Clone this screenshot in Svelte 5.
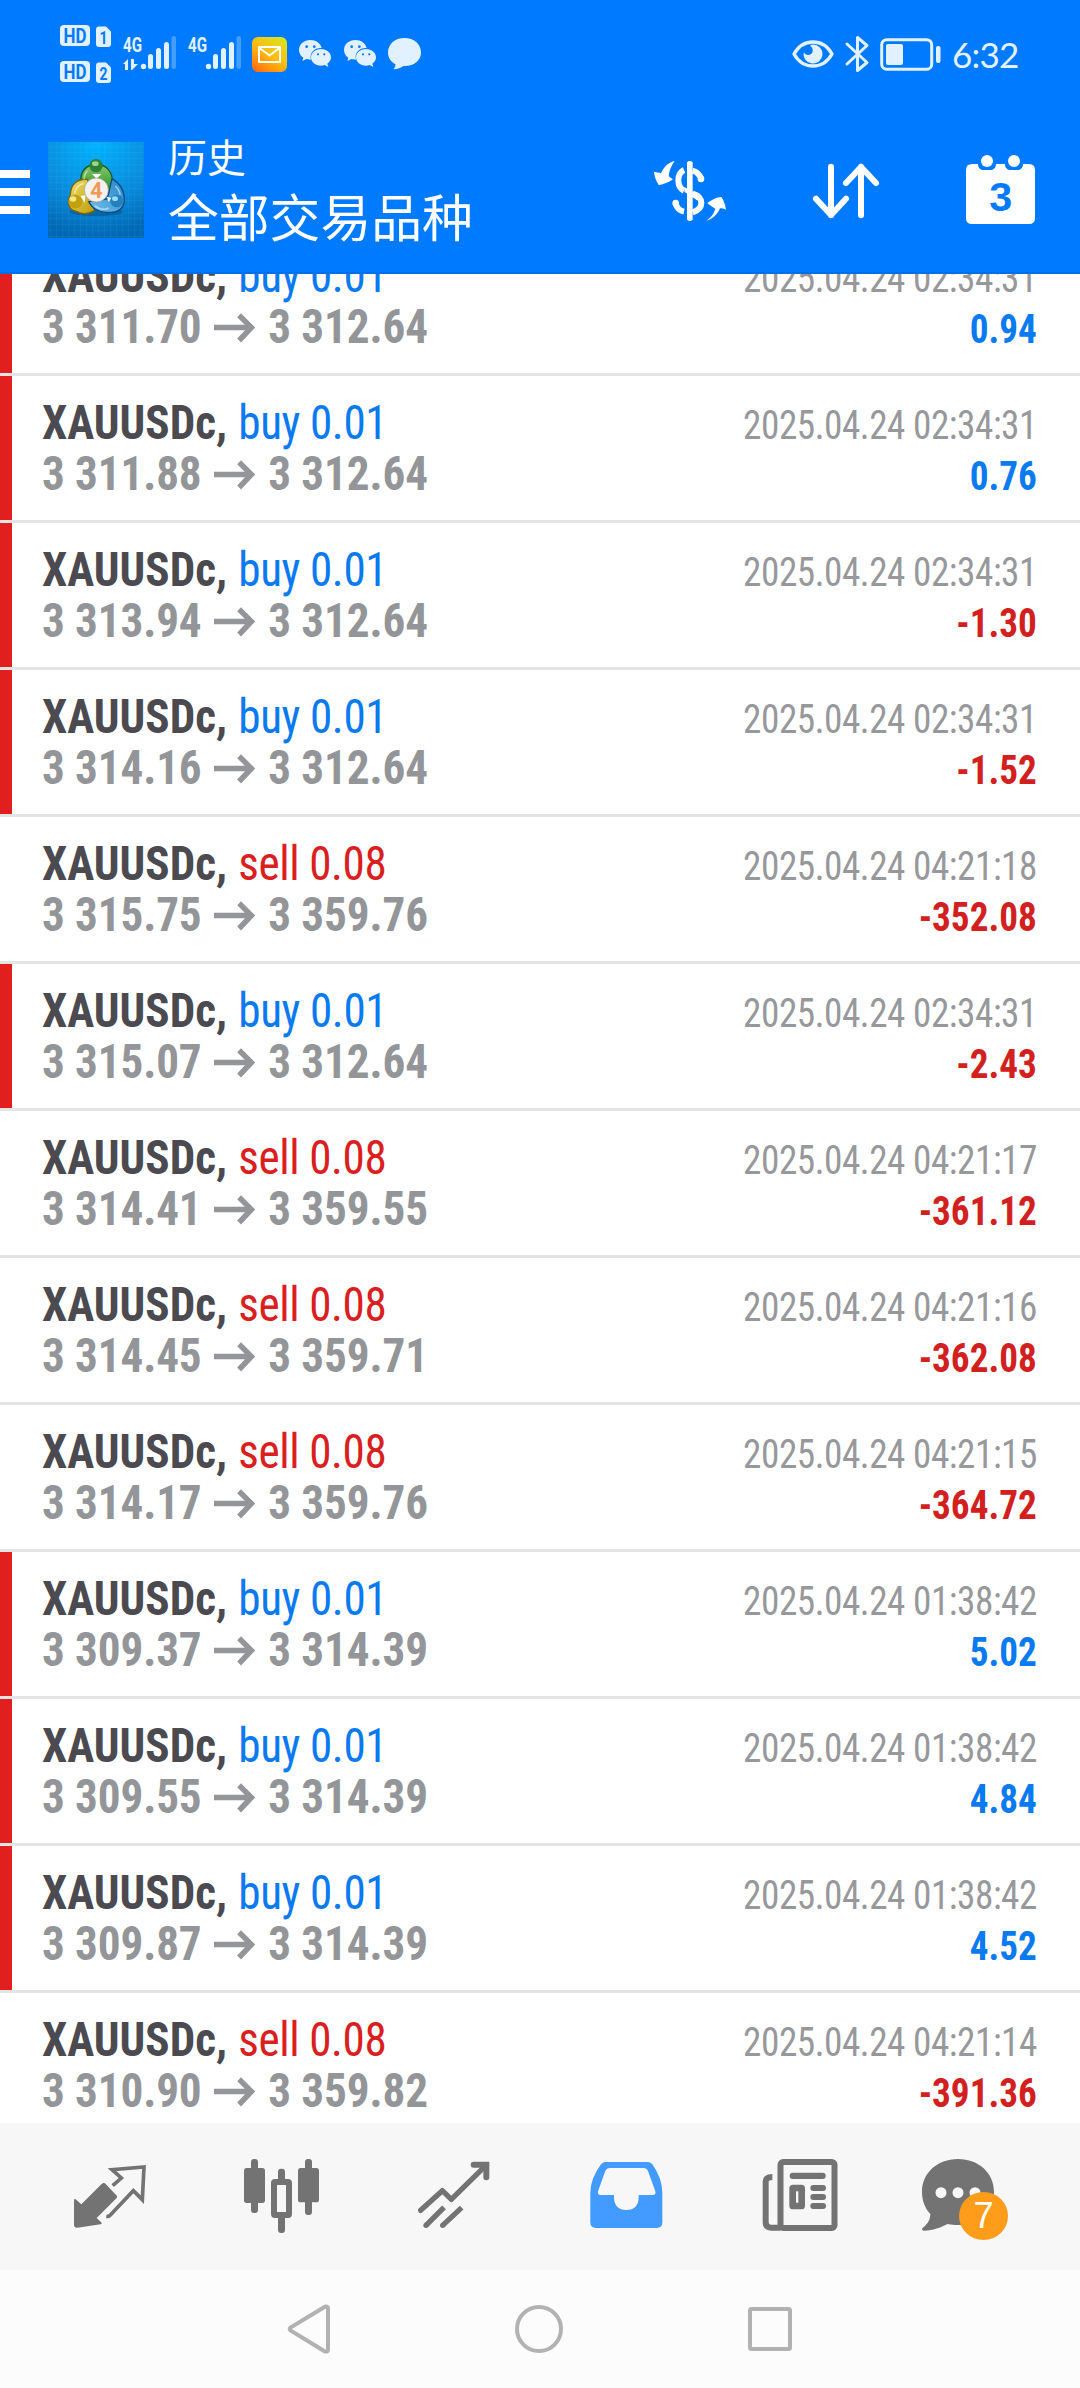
<script>
  const deals = [
    { side: "buy", lots: "0.01", open: "3 311.70", close: "3 312.64", time: "2025.04.24 02:34:31", profit: "0.94", mark: true },
    { side: "buy", lots: "0.01", open: "3 311.88", close: "3 312.64", time: "2025.04.24 02:34:31", profit: "0.76", mark: true },
    { side: "buy", lots: "0.01", open: "3 313.94", close: "3 312.64", time: "2025.04.24 02:34:31", profit: "-1.30", mark: true },
    { side: "buy", lots: "0.01", open: "3 314.16", close: "3 312.64", time: "2025.04.24 02:34:31", profit: "-1.52", mark: true },
    { side: "sell", lots: "0.08", open: "3 315.75", close: "3 359.76", time: "2025.04.24 04:21:18", profit: "-352.08", mark: false },
    { side: "buy", lots: "0.01", open: "3 315.07", close: "3 312.64", time: "2025.04.24 02:34:31", profit: "-2.43", mark: true },
    { side: "sell", lots: "0.08", open: "3 314.41", close: "3 359.55", time: "2025.04.24 04:21:17", profit: "-361.12", mark: false },
    { side: "sell", lots: "0.08", open: "3 314.45", close: "3 359.71", time: "2025.04.24 04:21:16", profit: "-362.08", mark: false },
    { side: "sell", lots: "0.08", open: "3 314.17", close: "3 359.76", time: "2025.04.24 04:21:15", profit: "-364.72", mark: false },
    { side: "buy", lots: "0.01", open: "3 309.37", close: "3 314.39", time: "2025.04.24 01:38:42", profit: "5.02", mark: true },
    { side: "buy", lots: "0.01", open: "3 309.55", close: "3 314.39", time: "2025.04.24 01:38:42", profit: "4.84", mark: true },
    { side: "buy", lots: "0.01", open: "3 309.87", close: "3 314.39", time: "2025.04.24 01:38:42", profit: "4.52", mark: true },
    { side: "sell", lots: "0.08", open: "3 310.90", close: "3 359.82", time: "2025.04.24 04:21:14", profit: "-391.36", mark: false },
  ];
</script>

{#snippet signal(arrows)}
  <svg class="signal" width="54" height="36" viewBox="0 0 54 36">
    <text x="0" y="15.500" textLength="19" lengthAdjust="spacingAndGlyphs" class="net">4G</text>
    {#if arrows}
      <path d="M0 28l5-5v11h-3v-6zM8 23h3v5h4l-6 6h-1z" />
    {/if}
    <circle cx="20.5" cy="30.5" r="2.7" />
    <rect x="25" y="18" width="5" height="15" rx="2.5" />
    <rect x="33" y="12" width="5" height="21" rx="2.5" />
    <rect x="41" y="6" width="5" height="27" rx="2.5" />
    <rect x="48.5" y="0" width="4.5" height="33" rx="2.2" opacity="0.3" />
  </svg>
{/snippet}

{#snippet wechat()}
  <svg class="wechat" width="33" height="28" viewBox="0 0 99 84">
    <path d="M34 0C15 0 0 13 0 30c0 10 5 18 13 23l-3 10 12-6c4 1 8 2 14 2-6-22 12-36 32-35C65 10 51 0 34 0z" />
    <path d="M66 27c-17 0-30 11-30 25s13 25 30 25c4 0 8-1 11-2l11 6-3-10c7-5 11-11 11-19 0-14-13-25-30-25z" />
    <g class="hole">
      <circle cx="23" cy="20" r="4" /><circle cx="46" cy="20" r="4" />
      <circle cx="57" cy="43" r="3.3" /><circle cx="76" cy="43" r="3.3" />
    </g>
  </svg>
{/snippet}

<div class="screen">
  <header>
    <div class="status">
      <svg class="hd" width="52" height="58" viewBox="60 25 52 58">
        {#each [0, 36] as dy, i}
          <rect x="60" y={25 + dy} width="30" height="21" rx="4" />
          <path transform="translate(0 {dy})" d="M99 26.500h7l5 5v12.500q0 3-3 3h-9q-3 0-3-3v-14.500q0-3 3-3z" />
          <text x="63.500" y={42.500 + dy} textLength="23" lengthAdjust="spacingAndGlyphs">HD</text>
          <text x="99.500" y={43.500 + dy} class="sim" textLength="8" lengthAdjust="spacingAndGlyphs">{i + 1}</text>
        {/each}
      </svg>
      {@render signal(true)}
      {@render signal(false)}
      <svg class="mail" width="35" height="35" viewBox="0 0 35 35">
        <defs>
          <linearGradient id="mail" x1="0.1" y1="1" x2="0.8" y2="0">
            <stop offset="0" stop-color="#ff6a10" />
            <stop offset="0.5" stop-color="#ffb90f" />
            <stop offset="1" stop-color="#d8e41c" />
          </linearGradient>
        </defs>
        <rect width="35" height="35" rx="6" fill="url(#mail)" />
        <path d="M7 10h21v15H7zM7 10.500l10.500 8 10.500-8" fill="none" stroke="#fff" stroke-width="2" stroke-linejoin="round" />
      </svg>
      {@render wechat()}
      {@render wechat()}
      <svg class="bubble" width="33" height="32" viewBox="0 0 33 32">
        <path d="M16.500 0C7 0 0 6 0 14.500c0 5 2.500 9 7.500 11.700 0 2-.8 3.600-2.200 5 4.500 0 7.800-1.500 10-3.300C26 28.500 33 22.500 33 14.500 33 6 26 0 16.500 0z" />
      </svg>
      <svg class="eye" width="42" height="28" viewBox="0 0 42 28">
        <path d="M2 14C11-2 31-2 40 14 31 30 11 30 2 14z" fill="none" stroke="#e2f1ff" stroke-width="3.400" stroke-linejoin="round" />
        <path d="M21 4.500a9.500 9.500 0 1 1-9.300 7.500c2 4.500 8.500 3.500 9-1 .3-2.300-.7-4-2.700-5.500 1-.6 2-1 3-1z" />
      </svg>
      <svg class="bt" width="24" height="38" viewBox="0 0 24 38">
        <path d="M2 9l20 18.500-9.500 8V2.500l9.500 8L2 29" fill="none" stroke="#e2f1ff" stroke-width="3" stroke-linejoin="round" stroke-linecap="round" />
      </svg>
      <svg class="battery" width="61" height="33" viewBox="0 0 61 33">
        <rect x="1.700" y="1.700" width="50" height="29.500" rx="5" fill="none" stroke="#e2f1ff" stroke-width="3" />
        <rect x="6" y="6" width="17" height="21" rx="2" />
        <rect x="56" y="8" width="4.500" height="17" rx="2" />
      </svg>
      <span class="clock">6:32</span>
    </div>

    <div class="toolbar">
      <div class="burger"><i></i><i></i><i></i></div>
      <svg class="logo" width="96" height="96" viewBox="144 66 288 288">
        <defs>
          <radialGradient id="sky" cx="0.5" cy="0" r="1">
            <stop offset="0" stop-color="#00b4ff" />
            <stop offset="0.6" stop-color="#0a8bdc" />
            <stop offset="1" stop-color="#0067b2" />
          </radialGradient>
          <linearGradient id="green" x1="0" y1="0" x2="0" y2="1">
            <stop offset="0" stop-color="#8dcb6c" /><stop offset="1" stop-color="#238c28" />
          </linearGradient>
          <linearGradient id="gold" x1="0" y1="0" x2="1" y2="1">
            <stop offset="0" stop-color="#eee06a" /><stop offset="1" stop-color="#bf9d08" />
          </linearGradient>
          <linearGradient id="azure" x1="1" y1="0" x2="0" y2="1">
            <stop offset="0" stop-color="#2484c8" /><stop offset="1" stop-color="#72c2ee" />
          </linearGradient>
          <pattern id="mesh" width="18" height="18" patternUnits="userSpaceOnUse">
            <path d="M8 0v18M0 8h18" stroke="#5cd0ff" stroke-opacity="0.12" stroke-width="2" />
          </pattern>
        </defs>
        <rect x="144" y="66" width="288" height="288" fill="url(#sky)" />
        <rect x="144" y="66" width="288" height="288" fill="url(#mesh)" />
        <ellipse cx="289" cy="276" rx="80" ry="12" fill="#00406f" opacity="0.4" />
        <path d="M242 182c0-26 14-46 46-50 34 2 50 26 50 56 0 12-3 20-8 28l-86-10z" fill="url(#green)" stroke="#135c2c" stroke-width="4" />
        <path d="M262 178c-32-2-50 16-51 46-12 26-4 46 18 50 18 10 36 10 54-2l-6-50z" fill="url(#gold)" stroke="#796410" stroke-width="4" />
        <path d="M336 176c24 14 38 36 37 68-4 24-20 34-43 33-28 3-52-9-64-32l56-8z" fill="url(#azure)" stroke="#084c85" stroke-width="4" />
        <path d="M252 190c-16 4-26 14-28 30M262 152c-8 10-10 20-9 26M284 258c14 10 30 12 42 6M346 198c8 8 14 18 14 26" fill="none" stroke="#fff" stroke-opacity="0.5" stroke-width="5" />
        <circle cx="288" cy="137" r="20" fill="#2f8135" />
        <ellipse cx="286" cy="131" rx="10" ry="7" fill="#9bd58d" />
        <circle cx="226" cy="245" r="21" fill="#c1a011" />
        <ellipse cx="219" cy="237" rx="10" ry="8" fill="#f6e680" />
        <circle cx="350" cy="243" r="19" fill="#247fbd" />
        <ellipse cx="345" cy="236" rx="9" ry="7" fill="#9bd8fa" />
        <path d="M276 162h28l-14 14zM242 228l14-2-2 22zM320 230l14 4-8 12z" fill="#fff" />
        <circle cx="289" cy="210" r="36" fill="#f4f2f0" stroke="#a89c80" stroke-width="2" />
        <text x="271" y="233" class="four">4</text>
      </svg>
      <div class="titles">
        <span class="sub">历史</span>
        <span class="main">全部交易品种</span>
      </div>
      <svg class="act dollar" width="75" height="72" viewBox="99 66 225 216">
        <path d="M164 90c-14 3-31 14-41 36-7-1-14-2-21-4 1 12 5 26 14 40 12-1 26-6 43-17-5-3-9-6-13-9 1-15 6-29 18-46z" />
        <path d="M256 270c14-6 25-20 30-37-8-4-15-9-24-17 14-10 28-17 42-18 8 11 12 24 14 38-6-3-12-4-18-4-8 20-24 34-44 38z" />
        <path d="M192 117q-17 8-17 31t17 31M218 119c14 3 20 12 26 24M218 188q26 8 26 28t-26 28M166 217c6 16 12 22 26 25" fill="none" stroke="#fff" stroke-width="18" />
        <path d="M193 168l50 28-12 12-38-26zM193 106v28M220 106v32" />
        <path d="M201 94q8-8 17 0v172q-8 8-17 0z" />
        <circle cx="243" cy="144" r="10" /><circle cx="167" cy="216" r="10" />
      </svg>
      <svg class="act sort" width="68" height="72" viewBox="576 66 204 216">
        <path d="M633 107v146M588 203l45 49 45-49M723 253V107M678 156l45-48 45 48" fill="none" stroke="#fff" stroke-width="18" stroke-linecap="round" stroke-linejoin="round" />
      </svg>
      <svg class="act cal" width="71" height="72" viewBox="1035 66 213 216">
        <path d="M1056 99h18c0 12 8 18 17 18h20c9 0 17-6 17-18h27c0 12 8 18 17 18h20c9 0 17-6 17-18h18q18 0 18 18v144q0 18-18 18h-171q-18 0-18-18V117q0-18 18-18z" />
        <circle cx="1101" cy="90" r="18" /><circle cx="1182" cy="90" r="18" />
        <text x="1142" y="241" class="day">3</text>
      </svg>
    </div>
  </header>

  <main>
    <div class="deals">
      {#each deals as deal}
        <div class="deal" class:mark={deal.mark}>
          <div class="left">
            <div class="name"><b>XAUUSDc,</b> <span class={deal.side}>{deal.side} {deal.lots}</span></div>
            <div class="prices">
              {deal.open}
              <svg width="45" height="30" viewBox="0 0 43 30" preserveAspectRatio="none"><path d="M0 14.500h38M25.500 2.200L38 14.500 25.500 27.500" fill="none" stroke="#939598" stroke-width="5.500" /></svg>
              {deal.close}
            </div>
          </div>
          <div class="right">
            <div class="time">{deal.time}</div>
            <div class="profit" class:loss={deal.profit[0] === "-"}>{deal.profit}</div>
          </div>
        </div>
      {/each}
    </div>
  </main>

  <nav>
    <svg width="74" height="84" viewBox="99 141 222 252">
      <path d="M190 219q3-1 5 1l36 38q1 4-1 6l-60 60 15 14q1 4-3 5l-70 10q-10 1-10-9v-73q0-5 4-4l18 16 61-61z" />
      <path d="M218 227l26-23-28-25 96-8-5 98-27-27-71 75q-3 3-10 2" fill="none" stroke="#737373" stroke-width="11" />
    </svg>
    <svg width="77" height="84" viewBox="609 141 231 252">
      <rect x="633" y="147" width="21" height="162" rx="9" />
      <rect x="612" y="174" width="63" height="105" rx="8" />
      <rect x="795" y="147" width="21" height="168" rx="9" />
      <rect x="774" y="174" width="63" height="103" rx="8" />
      <rect x="714" y="176" width="21" height="50" rx="9" />
      <rect x="714" y="310" width="21" height="59" rx="9" />
      <rect x="702" y="216" width="45" height="99" rx="3" fill="#f7f7f7" stroke="#737373" stroke-width="18" />
    </svg>
    <svg width="73" height="84" viewBox="1131 141 219 252">
      <g fill="none" stroke="#737373" stroke-width="16">
        <path d="M1142 301l65-59 27 26 103-101" stroke-linecap="round" stroke-linejoin="round" />
        <path d="M1301 164h38v38" stroke-width="18" stroke-linecap="round" />
        <path d="M1158 346l54-54M1208 346l57-53" />
      </g>
      <circle cx="1158" cy="346" r="8" /><circle cx="1208" cy="346" r="8" />
    </svg>
    <svg width="73" height="84" viewBox="90 141 219 252">
      <path fill="#439bff" fill-rule="evenodd" d="M137 156h126q8 0 14 7 30 42 30 87v87q0 17-17 17H108q-17 0-17-17v-87q0-44 32-87 6-7 14-7zM150 174q-10 0-14 9l-22 61q-2 11 8 11h40v9q2 36 37 36t37-36v-9h42q11 0 8-11l-22-61q-4-9-14-9z" />
    </svg>
    <svg width="76" height="84" viewBox="606 141 228 252">
      <path d="M662 353h-29q-16 0-16-16V215q0-14 20-14" fill="none" stroke="#737373" stroke-width="18" />
      <rect x="661.500" y="156" width="162" height="198" rx="8" fill="none" stroke="#737373" stroke-width="18" />
      <rect x="689" y="188" width="108" height="19" rx="9" />
      <rect x="698" y="234" width="27" height="54" rx="1" fill="none" stroke="#737373" stroke-width="20" stroke-linejoin="round" />
      <rect x="751" y="225" width="47" height="18" rx="9" />
      <rect x="751" y="252" width="47" height="18" rx="9" />
      <rect x="751" y="279" width="47" height="18" rx="9" />
    </svg>
    <div class="chat">
      <svg width="88" height="84" viewBox="1083 141 264 252">
        <path d="M1194 147c-62 0-108 42-108 98 0 26 9 50 25 67 0 17-8 30-24 43-2 5 0 7 5 7 28-1 49-9 71-20 12 2 20 3 31 3 62 0 108-42 108-100 0-56-46-98-108-98z" />
        <g fill="#f7f7f7"><circle cx="1143" cy="248" r="16.500" /><circle cx="1194" cy="248" r="16.500" /><circle cx="1245" cy="248" r="16.500" /></g>
      </svg>
      <span class="badge">7</span>
    </div>
  </nav>

  <div class="system">
    <svg width="44" height="50" viewBox="0 0 44 50"><path d="M3.500 23.500Q2 25 3.500 26.500L38 47.500Q41 48 41 45.500V4.500Q41 2 38 2.700z" /></svg>
    <svg width="50" height="50" viewBox="0 0 50 50"><circle cx="25" cy="25" r="22" /></svg>
    <svg width="46" height="50" viewBox="0 0 46 50"><rect x="3" y="5" width="40" height="40" rx="1.500" /></svg>
  </div>
</div>

<style>
  :global(body) {
    background: #fff;
  }

  .screen {
    width: 1080px;
    height: 2388px;
    display: flex;
    flex-direction: column;
    overflow: hidden;
    font-family: Roboto, "Noto Sans CJK SC", sans-serif;
  }

  svg {
    display: block;
    flex: none;
    overflow: visible;
  }

  header {
    box-sizing: border-box;
    height: 274px;
    flex: none;
    background: #007aff;
    border-bottom: 2px solid #006fe6;
    color: #fff;
    fill: #fff;
  }

  .status {
    height: 108px;
    display: flex;
    align-items: center;
    padding-left: 60px;
    fill: #e2f1ff;
  }

  .hd text {
    font: bold 20px Roboto, sans-serif;
    fill: #007aff;
  }

  .hd .sim {
    font-size: 18px;
  }

  .signal {
    margin-left: 11px;
  }

  .net {
    font: bold 21px Roboto, sans-serif;
  }

  .mail {
    margin-left: 10px;
  }

  .wechat {
    margin-left: 12px;
  }

  .hole {
    fill: #007aff;
  }

  .bubble {
    margin-left: 11px;
  }

  .eye {
    margin-left: 371px;
  }

  .bt {
    margin-left: 11px;
  }

  .battery {
    margin-left: 11px;
  }

  .clock {
    margin-left: 11px;
    color: #e2f1ff;
    font-family: Lato, sans-serif;
    font-size: 35px;
    line-height: 40px;
    letter-spacing: -0.8px;
  }

  .toolbar {
    height: 164px;
    display: flex;
    align-items: center;
  }

  .burger {
    width: 30px;
    display: flex;
    flex-direction: column;
    gap: 10px;
    margin-top: 4px;
  }

  .burger i {
    height: 8px;
    background: #fff;
  }

  .logo {
    margin-left: 18px;
  }

  .four {
    font: bold 64px Roboto, sans-serif;
    fill: #ef9a55;
  }

  .titles {
    width: 485px;
    margin: 3px 0 0 24px;
    display: flex;
    flex-direction: column;
    white-space: nowrap;
  }

  .sub {
    font-size: 39px;
    line-height: 56px;
  }

  .main {
    font-size: 50.8px;
    line-height: 65px;
  }

  .sort {
    margin-left: 84px;
  }

  .cal {
    margin-left: 85px;
  }

  .act {
    margin-top: -3px;
  }

  .day {
    font: bold 124px "Liberation Sans", sans-serif;
    text-anchor: middle;
    fill: #007aff;
  }

  main {
    height: 1849px;
    flex: none;
    overflow: hidden;
    background: #fff;
  }

  /* the list is scrolled by part of a row */
  .deals {
    margin-top: -45px;
  }

  .deal {
    box-sizing: border-box;
    height: 147px;
    display: flex;
    justify-content: space-between;
    padding: 21px 43px 0 42px;
    border-bottom: 3px solid #e4e4e4;
    font-stretch: 75%;
    white-space: nowrap;
  }

  .mark {
    box-shadow: inset 12px 0 #e11f1f;
  }

  .left {
    font-size: 48px;
    line-height: 51px;
    transform: scaleX(0.94);
    transform-origin: left;
  }

  .name b {
    color: #4a4a50;
  }

  .name span {
    margin-left: 1px;
    letter-spacing: -0.4px;
  }

  .buy {
    color: #0a7af0;
  }

  .sell {
    color: #d9201f;
  }

  .prices {
    display: flex;
    gap: 13px;
    color: #939598;
    font-weight: bold;
    letter-spacing: -0.1px;
  }

  .prices svg {
    margin-top: 12px;
  }

  .right {
    padding-top: 3px;
    text-align: right;
    font-size: 40px;
    line-height: 51px;
    transform: scaleX(0.93);
    transform-origin: right;
  }

  .time {
    color: #97989b;
    letter-spacing: -0.5px;
  }

  .profit {
    color: #0a7af0;
    font-weight: bold;
  }

  .loss {
    color: #d2201f;
  }

  nav {
    box-sizing: border-box;
    height: 147px;
    flex: none;
    display: grid;
    grid-template-columns: 170px 174px 173px 172px 159px 88px;
    padding: 34px 0 0 73px;
    background: #f7f7f7;
    fill: #737373;
  }

  .chat {
    position: relative;
  }

  .badge {
    position: absolute;
    left: 38px;
    top: 35px;
    width: 49px;
    height: 48px;
    border-radius: 50%;
    background: #ff9c19;
    color: #fff;
    font: 36px/48px "Liberation Sans", sans-serif;
    text-align: center;
  }

  .system {
    height: 118px;
    display: flex;
    align-items: center;
    justify-content: center;
    gap: 183px;
    background: #fcfcfc;
    fill: none;
    stroke: #b2b2b2;
    stroke-width: 4;
  }
</style>
